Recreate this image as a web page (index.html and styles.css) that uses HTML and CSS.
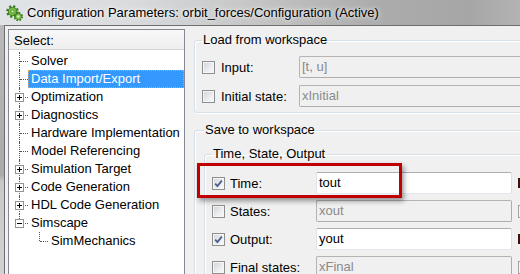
FILE: index.html
```html
<!DOCTYPE html>
<html>
<head>
<meta charset="utf-8">
<link rel="stylesheet" href="styles.css">
</head>
<body>
<div class="window">
  <div class="titlebar">
    <svg class="appicon" viewBox="0 0 17 16" width="17" height="16">
      <circle cx="6.5" cy="6.5" r="5" fill="none" stroke="#3a7a1e" stroke-width="2.6" stroke-dasharray="2.1 1.83"/>
      <circle cx="6.5" cy="6.5" r="4.1" fill="#78bc45" stroke="#3a7a1e" stroke-width="0.9"/>
      <circle cx="6.5" cy="6.5" r="1.4" fill="#d9efc8" stroke="#3a7a1e" stroke-width="0.6"/>
      <circle cx="12.3" cy="11.6" r="3.6" fill="none" stroke="#3a7a1e" stroke-width="2.2" stroke-dasharray="1.6 1.23"/>
      <circle cx="12.3" cy="11.6" r="2.9" fill="#8fd05a" stroke="#3a7a1e" stroke-width="0.8"/>
      <circle cx="12.3" cy="11.6" r="1" fill="#e6f5d8"/>
    </svg>
    <span class="title">Configuration Parameters: orbit_forces/Configuration (Active)</span>
  </div>
  <div class="frame">
    <div class="client">
      <div class="tree">
        <div class="tree-head">Select:</div>
        <ul class="tree-list">
          <li class="node"><span class="branch"></span><span class="label">Solver</span></li>
          <li class="node sel"><span class="branch"></span><span class="label">Data Import/Export</span></li>
          <li class="node"><span class="branch"><span class="toggle plus"></span></span><span class="label">Optimization</span></li>
          <li class="node"><span class="branch"><span class="toggle plus"></span></span><span class="label">Diagnostics</span></li>
          <li class="node"><span class="branch"></span><span class="label">Hardware Implementation</span></li>
          <li class="node"><span class="branch"></span><span class="label">Model Referencing</span></li>
          <li class="node"><span class="branch"><span class="toggle plus"></span></span><span class="label">Simulation Target</span></li>
          <li class="node"><span class="branch"><span class="toggle plus"></span></span><span class="label">Code Generation</span></li>
          <li class="node"><span class="branch"><span class="toggle plus"></span></span><span class="label">HDL Code Generation</span></li>
          <li class="node last"><span class="branch"><span class="toggle"></span></span><span class="label">Simscape</span></li>
          <li class="node l1 last"><span class="branch"></span><span class="label">SimMechanics</span></li>
        </ul>
      </div>
      <div class="pane">
        <fieldset class="group load">
          <legend>Load from workspace</legend>
          <div class="row">
            <span class="check"></span><span class="lbl">Input:</span><div class="field off">[t, u]</div>
          </div>
          <div class="row">
            <span class="check"></span><span class="lbl">Initial state:</span><div class="field off">xInitial</div>
          </div>
        </fieldset>
        <fieldset class="group save">
          <legend>Save to workspace</legend>
          <fieldset class="group tso">
            <legend>Time, State, Output</legend>
            <div class="row">
              <span class="check on"><svg viewBox="0 0 11 11" width="11" height="11"><path d="M2.2 5.6 L4.4 8 L8.8 2.6" fill="none" stroke="#4a5e92" stroke-width="1.8"/></svg></span><span class="lbl">Time:</span><div class="field">tout</div><span class="side"></span>
            </div>
            <div class="row">
              <span class="check"></span><span class="lbl">States:</span><div class="field off">xout</div><span class="side off"></span>
            </div>
            <div class="row">
              <span class="check on"><svg viewBox="0 0 11 11" width="11" height="11"><path d="M2.2 5.6 L4.4 8 L8.8 2.6" fill="none" stroke="#4a5e92" stroke-width="1.8"/></svg></span><span class="lbl">Output:</span><div class="field">yout</div><span class="side"></span>
            </div>
            <div class="row">
              <span class="check"></span><span class="lbl">Final states:</span><div class="field off">xFinal</div><span class="side off"></span>
            </div>
          </fieldset>
        </fieldset>
      </div>
    </div>
  </div>
</div>
<div class="callout"></div>
</body>
</html>
```
FILE: styles.css
```css
html, body {
  margin: 0;
  padding: 0;
}
body {
  width: 520px;
  height: 274px;
  overflow: hidden;
  position: relative;
  font-family: "Liberation Sans", Arial, sans-serif;
  font-size: 13px;
  color: #000;
  background: #b0b0b0;
}
.window {
  width: 520px;
  height: 274px;
  display: flex;
  flex-direction: column;
}
.titlebar {
  flex: none;
  height: 25px;
  display: flex;
  align-items: center;
  padding-left: 6px;
  background: linear-gradient(90deg, #e1e4e7 0%, #d9dbdd 25%, #c4c4c4 50%, #acacac 72%, #a6a6a6 90%, #b3b3b3 100%);
}
.appicon {
  flex: none;
  margin-right: 4px;
  margin-top: 1px;
}
.title {
  font-size: 13px;
  white-space: nowrap;
  text-shadow: 0 0 6px rgba(255,255,255,0.9), 0 0 3px rgba(255,255,255,0.7);
}
.frame {
  flex: 1;
  min-height: 0;
  display: flex;
  background: linear-gradient(#b9b9b9 0%, #aaaaaa 60%, #c8c8c8 63%, #d2d2d2 100%);
}
.client {
  flex: 1;
  margin-left: 4px;
  border-left: 1px solid #6e6e6e;
  border-top: 1px solid #6e6e6e;
  background: #f0f0f0;
  display: flex;
  align-items: flex-start;
  overflow: hidden;
}
.tree {
  flex: none;
  margin: 3px 0 0 3px;
  width: 175px;
  height: 270px;
  border: 1px solid #828790;
  background: #fff;
}
.tree-head {
  height: 16px;
  padding: 3px 0 0 5px;
  line-height: 16px;
  border-bottom: 1px solid #d5d5d5;
  background: linear-gradient(#f8f8f8, #eeeeee);
}
.tree-list {
  list-style: none;
  margin: 0;
  padding: 2px 0 0 0;
}
.node {
  height: 18px;
  display: flex;
}
.branch {
  flex: none;
  width: 19px;
  position: relative;
}
.branch::before {
  content: "";
  position: absolute;
  left: 10px;
  top: 0;
  bottom: 0;
  border-left: 1px dotted #555;
}
.branch::after {
  content: "";
  position: absolute;
  left: 11px;
  top: 9px;
  width: 8px;
  border-top: 1px dotted #555;
}
.node.last .branch::before {
  bottom: 9px;
}
.node.l1 .branch {
  width: 39px;
}
.node.l1 .branch::before {
  left: 30px;
}
.node.l1 .branch::after {
  left: 31px;
}
.toggle {
  position: absolute;
  z-index: 1;
  left: 6px;
  top: 5px;
  width: 7px;
  height: 7px;
  border: 1px solid #939393;
  background: #fff;
}
.toggle::before {
  content: "";
  position: absolute;
  left: 1px;
  top: 3px;
  width: 5px;
  height: 1px;
  background: #000;
}
.toggle.plus::after {
  content: "";
  position: absolute;
  left: 3px;
  top: 1px;
  width: 1px;
  height: 5px;
  background: #000;
}
.label {
  flex: 1;
  padding-left: 3px;
  line-height: 18px;
  white-space: nowrap;
}
.node.sel .label {
  background: #3399ff;
  color: #fff;
  outline: 1px dotted #e2a35a;
  outline-offset: -1px;
}
.pane {
  flex: none;
  width: 360px;
  margin-left: 9px;
  padding-top: 6px;
}
.group {
  margin: 0;
  border: 1px solid #d5dfe5;
  border-radius: 3px;
  box-shadow: inset 1px 1px 0 #fff, 1px 1px 0 #fff;
  padding: 8px 0 5px 7px;
}
.group legend {
  padding: 0 1px;
  line-height: 16px;
}
.save {
  margin-top: 9px;
  padding: 8px 0 0 9px;
}
.tso {
  padding: 10px 0 0 7px;
}
.row {
  display: flex;
  align-items: center;
  height: 22px;
}
.row + .row {
  margin-top: 7px;
}
.tso .row + .row {
  margin-top: 6px;
}
.check {
  flex: none;
  box-sizing: border-box;
  width: 13px;
  height: 13px;
  border: 1px solid #8e8f8f;
  background: linear-gradient(135deg, #cfd2d7 0%, #eceef0 60%, #f8f8f8 100%);
  box-shadow: inset 0 0 0 1px #f6f6f6;
  margin-right: 6px;
  display: flex;
}
.tso .check {
  margin-right: 5px;
}
.lbl {
  flex: none;
  width: 78px;
  white-space: nowrap;
}
.tso .lbl {
  width: 86px;
}
.field {
  flex: none;
  box-sizing: border-box;
  width: 260px;
  height: 22px;
  padding: 0 2px;
  line-height: 20px;
  border: 1px solid;
  border-color: #abadb3 #dbdfe6 #e3e9ef #e2e3ea;
  border-radius: 2px;
  background: #fff;
  white-space: nowrap;
}
.field.off {
  background: #f0f0f0;
  color: #8a8a8a;
  border-color: #b4b4b4 #adadad #adadad #b4b4b4;
}
.tso .field {
  width: 196px;
}
.side {
  flex: none;
  width: 2px;
  height: 10px;
  margin-left: 6px;
  background: #3a1212;
}
.side.off {
  box-sizing: border-box;
  width: 3px;
  height: 13px;
  border: 1px solid #a2a2a2;
  border-right: none;
  background: #f4f4f4;
}
.callout {
  position: absolute;
  left: 197px;
  top: 163px;
  width: 199px;
  height: 29px;
  border: 3px solid #c00000;
  box-shadow: 2px 3px 5px rgba(0,0,0,0.4);
}
```
